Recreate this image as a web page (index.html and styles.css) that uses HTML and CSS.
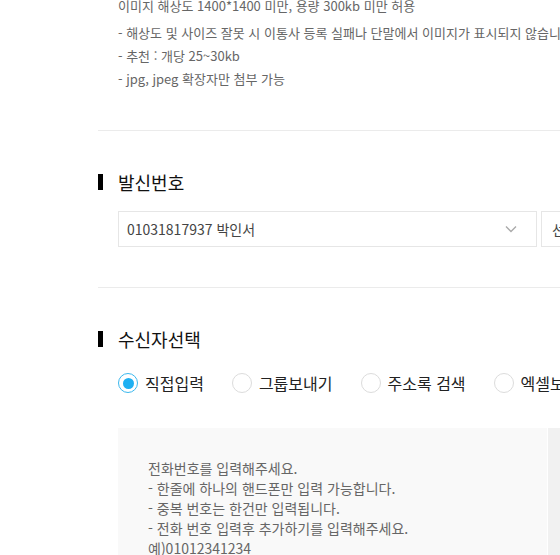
FILE: index.html
```html
<!DOCTYPE html>
<html lang="ko">
<head>
<meta charset="utf-8">
<link rel="stylesheet" href="styles.css">
</head>
<body>
<div class="page">
  <div class="notice">
    <p class="notice-main">이미지 해상도 1400*1400 미만, 용량 300kb 미만 허용</p>
    <ul class="notice-list">
      <li>- 해상도 및 사이즈 잘못 시 이통사 등록 실패나 단말에서 이미지가 표시되지 않습니다.</li>
      <li>- 추천 : 개당 25~30kb</li>
      <li>- jpg, jpeg 확장자만 첨부 가능</li>
    </ul>
  </div>

  <section class="section sender">
    <h2 class="sec-title">발신번호</h2>
    <div class="sender-row">
      <div class="select">
        <span class="select-value">01031817937 박인서</span>
        <svg class="chev" width="12" height="8" viewBox="0 0 12 8"><path d="M1 1.5 L6 6.5 L11 1.5" fill="none" stroke="#aaa" stroke-width="1.4"/></svg>
      </div>
      <button class="side-btn">선택</button>
    </div>
  </section>

  <section class="section receiver">
    <h2 class="sec-title">수신자선택</h2>
    <div class="radios">
      <label class="radio checked"><span class="dot"></span>직접입력</label>
      <label class="radio"><span class="dot"></span>그룹보내기</label>
      <label class="radio"><span class="dot"></span>주소록 검색</label>
      <label class="radio"><span class="dot"></span>엑셀보내기</label>
    </div>
    <div class="input-area">
      <div class="textarea">
        <p>전화번호를 입력해주세요.</p>
        <p>- 한줄에 하나의 핸드폰만 입력 가능합니다.</p>
        <p>- 중복 번호는 한건만 입력됩니다.</p>
        <p>- 전화 번호 입력후 추가하기를 입력해주세요.</p>
        <p>예)01012341234</p>
      </div>
      <div class="side-col"></div>
    </div>
  </section>
</div>
</body>
</html>
```

FILE: styles.css
```css
html, body {
  margin: 0;
  padding: 0;
  background: #fff;
  overflow: hidden;
}
body {
  font-family: "Noto Sans CJK KR", "Noto Sans", sans-serif;
  color: #333;
}
.page {
  width: 900px;
  padding-left: 98px;
}
.notice {
  padding-left: 20px;
  margin-top: -6px;
  padding-bottom: 40px;
  border-bottom: 1px solid #ebebeb;
  font-size: 13px;
  color: #666;
}
.notice-main {
  margin: 0;
  line-height: 23px;
}
.notice-list {
  list-style: none;
  margin: 4px 0 0;
  padding: 0;
}
.notice-list li {
  line-height: 23px;
  white-space: nowrap;
}
.section {
  border-bottom: 1px solid #ebebeb;
}
.sec-title {
  margin: 0;
  position: relative;
  padding-left: 20px;
  font-size: 18px;
  font-weight: 400;
  color: #111;
  line-height: 26px;
}
.sec-title::before {
  content: "";
  position: absolute;
  left: 0;
  top: 5px;
  width: 5px;
  height: 16px;
  background: #000;
}
.sender {
  padding-top: 38px;
  padding-bottom: 40px;
}
.sender-row {
  display: flex;
  gap: 4px;
  margin-top: 16px;
  padding-left: 20px;
}
.select {
  box-sizing: border-box;
  width: 419px;
  height: 36px;
  border: 1px solid #e6e6e6;
  display: flex;
  align-items: center;
  justify-content: space-between;
  padding: 0 19px 0 8px;
  font-size: 14px;
  color: #444;
}
.chev {
  display: block;
}
.side-btn {
  box-sizing: border-box;
  width: 100px;
  height: 36px;
  border: 1px solid #e6e6e6;
  background: #fff;
  font-family: inherit;
  font-size: 14px;
  color: #444;
  padding: 0 0 0 10px;
  text-align: left;
}
.receiver {
  border-bottom: none;
  padding-top: 38px;
}
.radios {
  display: flex;
  align-items: center;
  margin-top: 19px;
  padding-left: 20px;
}
.radio {
  display: flex;
  align-items: center;
  gap: 7px;
  font-size: 16px;
  color: #222;
  line-height: 24px;
  margin-right: 28px;
  white-space: nowrap;
}
.dot {
  box-sizing: border-box;
  width: 20px;
  height: 20px;
  border-radius: 50%;
  border: 1px solid #dcdcdc;
  background: #fff;
  position: relative;
}
.radio.checked .dot {
  border: 1.5px solid #3bb8ee;
}
.radio.checked .dot::after {
  content: "";
  position: absolute;
  left: 50%;
  top: 50%;
  width: 11px;
  height: 11px;
  margin: -5.5px 0 0 -5.5px;
  border-radius: 50%;
  background: #1eb0f2;
}
.input-area {
  display: flex;
  margin-top: 33px;
  margin-left: 20px;
  height: 200px;
}
.textarea {
  width: 429px;
  background: #f9f9f9;
  padding: 30px 0 0 30px;
  box-sizing: border-box;
  font-size: 14px;
  color: #666;
}
.textarea p {
  margin: 0;
  line-height: 20px;
}
.side-col {
  width: 300px;
  margin-left: 1px;
  background: #f1f1f1;
}
```
